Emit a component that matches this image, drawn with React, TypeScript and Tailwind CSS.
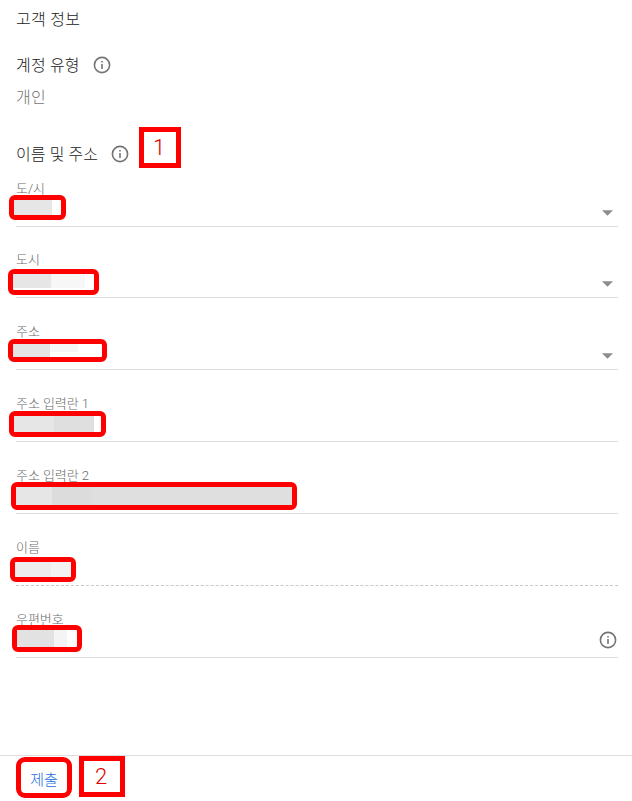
import React from "react";

function InfoIcon() {
  return (
    <svg className="block h-[18px] w-[18px] shrink-0" viewBox="0 0 18 18" fill="none">
      <circle cx="9" cy="9" r="7.6" stroke="#757575" strokeWidth="1.6" />
      <path d="M9 8v5M9 4.9v1.6" stroke="#757575" strokeWidth="1.6" />
    </svg>
  );
}

function Caret() {
  return (
    <svg className="mr-[5px] block h-[6px] w-[11px]" viewBox="0 0 11 6">
      <path d="M0 0.3h11L5.5 5.8z" fill="#8c8c8c" />
    </svg>
  );
}

type FieldProps = {
  label: string;
  size?: string;
  line?: string;
  mark: string;
  masks: string[];
  trailing?: React.ReactNode;
};

function Field({
  label,
  size = "h-[72px]",
  line = "border-solid border-[#dedede]",
  mark,
  masks,
  trailing,
}: FieldProps) {
  return (
    <div className={`relative flex flex-col border-b ${size} ${line}`}>
      <div className="mt-auto mb-[28px] h-[18px] whitespace-pre text-[13px] leading-[18px] tracking-[-0.05px] text-[#6a6a6a]">
        {label}
      </div>
      <div className={`absolute flex items-start overflow-hidden rounded-[6px] border-[5px] border-[#ff0000] bg-white ${mark}`}>
        {masks.map((m, i) => (
          <span key={i} className={`block shrink-0 ${m}`} />
        ))}
      </div>
      {trailing}
    </div>
  );
}

const caret = (
  <div className="absolute right-0 bottom-[10px]">
    <Caret />
  </div>
);

export default function App() {
  return (
    <div className="flex h-[801px] w-[632px] flex-col overflow-hidden bg-white font-['Roboto','Noto_Sans_CJK_KR',sans-serif] font-light">
      <main className="flex flex-col pr-[14px] pl-4">
        <h1 className="mt-[8px] h-6 text-[16px] leading-6 tracking-[0.3px] text-[#202020]">고객 정보</h1>
        <div className="mt-[21px] flex h-6 items-center gap-[13px]">
          <h2 className="w-[64px] pt-[2px] whitespace-nowrap text-[16px] leading-6 tracking-[0.2px] text-[#202020]">계정 유형</h2>
          <InfoIcon />
        </div>
        <p className="mt-[9px] h-6 text-[16px] leading-6 tracking-[0.3px] text-[#757575]">개인</p>
        <div className="mt-[17px] flex h-[41px] items-center">
          <h2 className="mt-[15px] w-[95px] whitespace-nowrap text-[16px] leading-6 tracking-[0.1px] text-[#202020]">이름 및 주소</h2>
          <div className="mt-[13px]">
            <InfoIcon />
          </div>
          <div className="ml-[10px] flex h-[41px] w-[42px] items-center justify-center border-[5px] border-[#ff0000] text-[22px] leading-none text-[#e00000]">
            <span className="-translate-x-px">1</span>
          </div>
        </div>

        <Field size="h-[59px]" label="도/시" mark="-left-[7px] top-[27px] h-[25px] w-[57px]" masks={["h-full w-[38px] bg-[#e6e6e6]"]} trailing={caret} />
        <Field size="h-[71px]" label="도시" mark="-left-2 top-[42px] h-[26px] w-[91px]" masks={["h-[14px] w-[38px] bg-[#e6e6e6]", "h-[14px] w-[34px] bg-[#f7f7f7]"]} trailing={caret} />
        <Field label="주소" mark="-left-2 top-[41px] h-[23px] w-[99px]" masks={["h-full w-[37px] bg-[#e4e4e4]", "h-[8px] w-[28px] bg-[#f6f6f6]"]} trailing={caret} />
        <Field label="주소 입력란 1" mark="-left-[7px] top-[41px] h-[26px] w-[97px]" masks={["h-full w-[40px] bg-[#e6e6e6]", "h-full w-[40px] bg-[#dfdfdf]"]} />
        <Field label="주소 입력란 2" mark="-left-[5px] top-[40px] h-[28px] w-[286px]" masks={["h-full w-[36px] bg-[#e6e6e6]", "h-full w-[40px] bg-[#dcdcdc]", "h-full w-[200px] bg-[#dfdfdf]"]} />
        <Field label="이름" line="border-dashed border-[#c8c8c8]" mark="-left-[6px] top-[43px] h-[25px] w-[66px]" masks={["h-full w-[36px] bg-[#ededed]", "h-full w-[20px] bg-[#f3f3f3]"]} />
        <Field
          label="우편번호"
          mark="-left-1 top-[39px] h-[27px] w-[70px]"
          masks={["h-full w-[37px] bg-[#e2e2e2]", "h-full w-[13px] bg-[#f4f4f4]"]}
          trailing={
            <div className="absolute right-px bottom-[8px]">
              <InfoIcon />
            </div>
          }
        />
      </main>

      <footer className="mt-auto flex h-[46px] border-t border-[#dedede] pl-4">
        <button className="mt-px flex h-[41px] w-[56px] items-center justify-center rounded-[9px] border-[5px] border-[#ff0000] pt-[5px] text-[15px] font-light text-[#1a6fe0]">
          제출
        </button>
        <div className="ml-[7px] flex h-[41px] w-[46px] items-center justify-center border-[5px] border-[#ff0000] pt-px text-[22px] leading-none text-[#e00000]">
          <span className="-translate-x-px">2</span>
        </div>
      </footer>
    </div>
  );
}
